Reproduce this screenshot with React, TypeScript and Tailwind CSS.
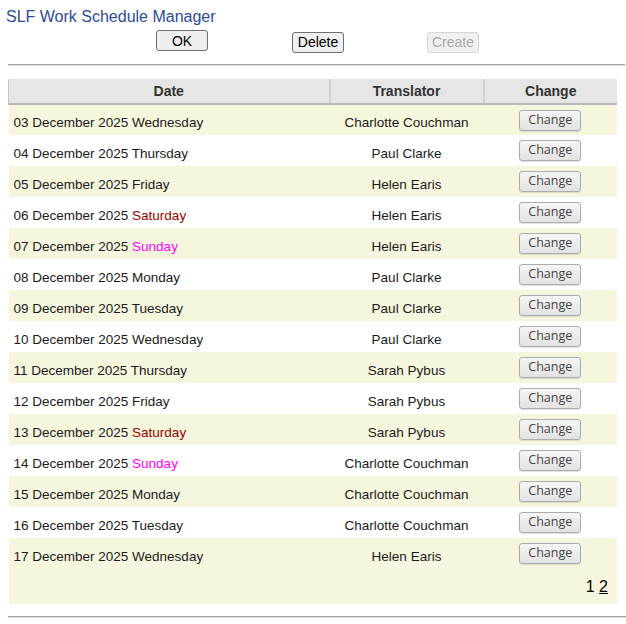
const rows: Array<{ date: string; day: string; translator: string }> = [
  { date: '03 December 2025', day: 'Wednesday', translator: 'Charlotte Couchman' },
  { date: '04 December 2025', day: 'Thursday', translator: 'Paul Clarke' },
  { date: '05 December 2025', day: 'Friday', translator: 'Helen Earis' },
  { date: '06 December 2025', day: 'Saturday', translator: 'Helen Earis' },
  { date: '07 December 2025', day: 'Sunday', translator: 'Helen Earis' },
  { date: '08 December 2025', day: 'Monday', translator: 'Paul Clarke' },
  { date: '09 December 2025', day: 'Tuesday', translator: 'Paul Clarke' },
  { date: '10 December 2025', day: 'Wednesday', translator: 'Paul Clarke' },
  { date: '11 December 2025', day: 'Thursday', translator: 'Sarah Pybus' },
  { date: '12 December 2025', day: 'Friday', translator: 'Sarah Pybus' },
  { date: '13 December 2025', day: 'Saturday', translator: 'Sarah Pybus' },
  { date: '14 December 2025', day: 'Sunday', translator: 'Charlotte Couchman' },
  { date: '15 December 2025', day: 'Monday', translator: 'Charlotte Couchman' },
  { date: '16 December 2025', day: 'Tuesday', translator: 'Charlotte Couchman' },
  { date: '17 December 2025', day: 'Wednesday', translator: 'Helen Earis' },
];

function dayClass(day: string) {
  if (day === 'Saturday') return 'text-[#990000]';
  if (day === 'Sunday') return 'text-[#ff00ff]';
  return '';
}

function TopButton({ label, disabled }: { label: string; disabled?: boolean }) {
  return (
    <button
      disabled={disabled}
      className={
        disabled
          ? 'h-[21px] w-[52px] rounded-[3px] border border-[#d4d4d4] bg-[#f0f0f0] text-[14px] leading-none text-[#a8a8a8]'
          : 'h-[21px] w-[52px] rounded-[3px] border border-[#707070] bg-[#efefef] text-[14px] leading-none text-black'
      }
    >
      {label}
    </button>
  );
}

export default function App() {
  return (
    <div className="min-h-[624px] bg-white font-['Liberation_Sans',Arial,sans-serif] text-[#1a1a1a]">
      <div className="pl-[6px] pt-[7px] text-[16px] leading-[19px] text-[#2d4c97]">
        SLF Work Schedule Manager
      </div>

      <div className="mt-[4px] flex pl-[156px]">
        <TopButton label="OK" />
        <div className="ml-[84px]">
          <TopButton label="Delete" />
        </div>
        <div className="ml-[83px]">
          <TopButton label="Create" disabled />
        </div>
      </div>

      <div className="ml-[8px] mr-[1px] mt-[10px] h-[2px] border-t border-b border-t-[#a8a8a8] border-b-[#d8d8d8]" />

      <table className="ml-[8px] mt-[13px] w-[609px] border-collapse text-[13.5px]">
        <thead>
          <tr className="h-[25px] bg-[#e6e6e6] text-[14px] font-bold text-[#333]">
            <th className="w-[321px] border-b-2 border-l border-b-[#b8b8b8] border-l-[#c8c8c8] text-center font-bold">
              Date
            </th>
            <th className="w-[154px] border-b-2 border-l-2 border-b-[#b8b8b8] border-l-[#d2d2d2] text-center font-bold">
              Translator
            </th>
            <th className="border-b-2 border-l-2 border-b-[#b8b8b8] border-l-[#d2d2d2] text-center font-bold">
              Change
            </th>
          </tr>
        </thead>
        <tbody>
          {rows.map((row, i) => (
            <tr key={row.date} className={i % 2 === 0 ? 'h-[31px] bg-[#f6f6de]' : 'h-[31px] bg-white'}>
              <td className="pl-[5px] pt-[7px] align-middle">
                {row.date} <span className={dayClass(row.day)}>{row.day}</span>
              </td>
              <td className="pt-[7px] text-center align-middle">{row.translator}</td>
              <td className="text-center align-middle">
                <button className="h-[21px] w-[62px] rounded-[3px] border border-[#acacac] bg-gradient-to-b from-[#f6f6f6] to-[#e2e2e2] font-['Open_Sans',sans-serif] text-[12.5px] leading-none text-[#444] shadow-[0_1px_1px_rgba(0,0,0,0.12)]">
                  Change
                </button>
              </td>
            </tr>
          ))}
          <tr className="h-[35px] bg-[#f6f6de]">
            <td colSpan={3} className="pr-[9px] pt-[1px] text-right text-[16px] text-black">
              1 <span className="underline">2</span>
            </td>
          </tr>
        </tbody>
      </table>

      <div className="ml-[8px] mt-[12px] h-[2px] border-t border-b border-t-[#a8a8a8] border-b-[#d8d8d8]" />
    </div>
  );
}
